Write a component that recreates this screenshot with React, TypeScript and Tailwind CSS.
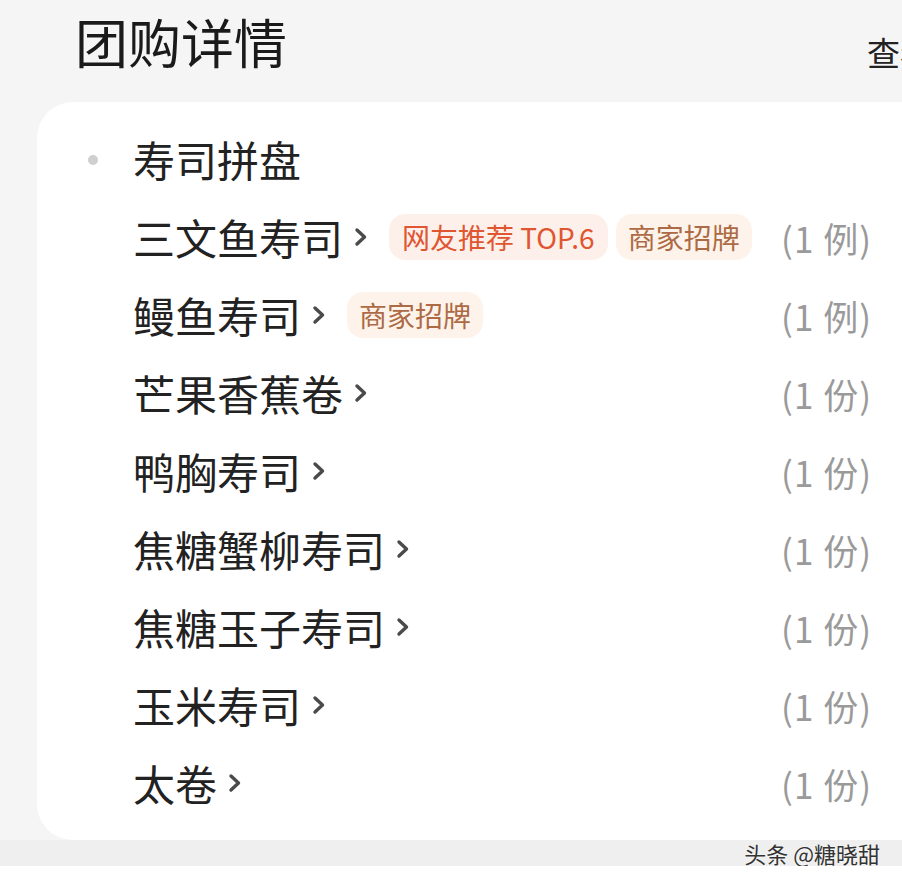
const font = { fontFamily: '"Noto Sans CJK SC", "Noto Sans", sans-serif' };

type Item = {
  name: string;
  count: string;
  tags?: { label: string; tone: "red" | "brown" }[];
};

const items: Item[] = [
  {
    name: "三文鱼寿司",
    count: "(1 例)",
    tags: [
      { label: "网友推荐 TOP.6", tone: "red" },
      { label: "商家招牌", tone: "brown" },
    ],
  },
  { name: "鳗鱼寿司", count: "(1 例)", tags: [{ label: "商家招牌", tone: "brown" }] },
  { name: "芒果香蕉卷", count: "(1 份)" },
  { name: "鸭胸寿司", count: "(1 份)" },
  { name: "焦糖蟹柳寿司", count: "(1 份)" },
  { name: "焦糖玉子寿司", count: "(1 份)" },
  { name: "玉米寿司", count: "(1 份)" },
  { name: "太卷", count: "(1 份)" },
];

const Chevron = () => (
  <svg width="16" height="24" viewBox="0 0 16 24" className="ml-[10px] shrink-0">
    <path d="M4 5 L11.5 12 L4 19" fill="none" stroke="#4a4a4a" strokeWidth="3.4" strokeLinecap="round" strokeLinejoin="round" />
  </svg>
);

const Tag = ({ label, tone }: { label: string; tone: "red" | "brown" }) => (
  <span
    className={
      tone === "red"
        ? "h-[46px] px-[13px] flex items-center rounded-[16px] bg-[#fdf0eb] text-[#df5630] text-[28px] leading-none whitespace-nowrap"
        : "h-[46px] px-[12px] flex items-center rounded-[16px] bg-[#fdf3ea] text-[#ad6a44] text-[28px] leading-none whitespace-nowrap"
    }
  >
    {label}
  </span>
);

export default function App() {
  return (
    <div className="w-[902px] h-[883px] overflow-hidden bg-[#f5f5f5] flex flex-col" style={font}>
      {/* Header */}
      <div className="h-[102px] flex items-start justify-between pl-[75px] overflow-hidden">
        <h1 className="text-[53px] leading-none mt-[15px] text-[#1a1a1a] font-normal">团购详情</h1>
        <span className="text-[33px] leading-none mt-[36px] text-[#222] whitespace-nowrap translate-x-[31px]">查看</span>
      </div>

      {/* Card */}
      <div className="ml-[37px] bg-white rounded-l-[36px] pt-[18px] pb-[18px] pr-[30px]">
        <div className="h-[78px] flex items-center">
          <span className="w-[10px] h-[10px] rounded-full bg-[#cfcfcf] ml-[51px] mr-[35px] translate-y-[1px]" />
          <span className="text-[42px] leading-none text-[#222]">寿司拼盘</span>
        </div>
        {items.map((it) => (
          <div key={it.name} className="h-[78px] flex items-center pl-[96px]">
            <span className="text-[42px] leading-none text-[#222] whitespace-nowrap">{it.name}</span>
            <Chevron />
            {it.tags && (
              <div className="flex items-center gap-[8px] ml-[20px]">
                {it.tags.map((t) => (
                  <Tag key={t.label} label={t.label} tone={t.tone} />
                ))}
              </div>
            )}
            <span className="ml-auto text-[35px] leading-none tracking-[1px] text-[#9a9a9a] whitespace-nowrap">{it.count}</span>
          </div>
        ))}
      </div>

      {/* Footer strip with watermark */}
      <div className="h-[26px] bg-[#efefef] flex items-center justify-end pr-[22px]">
        <span
          className="text-[22px] leading-none text-[#333]"
          style={{ textShadow: "0 0 2px #fff" }}
        >
          头条 @糖晓甜
        </span>
      </div>
      <div className="flex-1 bg-white" />
    </div>
  );
}
